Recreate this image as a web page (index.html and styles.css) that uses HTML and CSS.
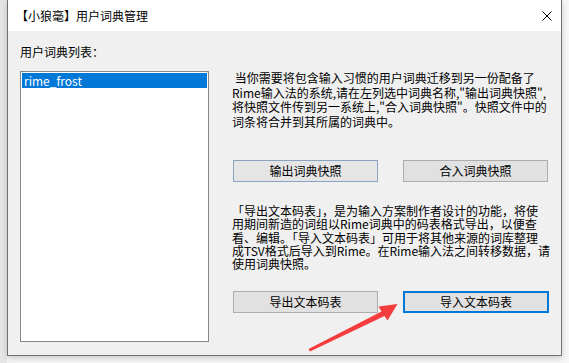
FILE: index.html
```html
<!DOCTYPE html>
<html lang="zh-CN">
<head>
<meta charset="utf-8">
<title>用户词典管理</title>
<link rel="stylesheet" href="styles.css">
</head>
<body>
<div class="screen">
  <div class="window">
    <div class="titlebar">
      <span class="title">【小狼毫】用户词典管理</span>
      <svg class="close" width="10" height="10" viewBox="0 0 10 10"><path d="M0.5 0.5 L9.5 9.5 M9.5 0.5 L0.5 9.5" stroke="#000" stroke-width="1" fill="none"/></svg>
    </div>
    <div class="body">
      <div class="left">
        <div class="label">用户词典列表：</div>
        <div class="listbox">
          <div class="item selected">rime_frost</div>
        </div>
      </div>
      <div class="right">
        <p class="desc desc1">&nbsp;当你需要将包含输入习惯的用户词典迁移到另一份配备了<br>Rime输入法的系统,请在左列选中词典名称,"输出词典快照",<br>将快照文件传到另一系统上,"合入词典快照"。快照文件中的<br>词条将合并到其所属的词典中。</p>
        <div class="btnrow row1">
          <button class="btn btn-hot">输出词典快照</button>
          <button class="btn">合入词典快照</button>
        </div>
        <p class="desc desc2">「导出文本码表」，是为输入方案制作者设计的功能，将使<br>用期间新造的词组以Rime词典中的码表格式导出，以便查<br>看、编辑。「导入文本码表」可用于将其他来源的词库整理<br>成TSV格式后导入到Rime。在Rime输入法之间转移数据，请<br>使用词典快照。</p>
        <div class="btnrow row2">
          <button class="btn">导出文本码表</button>
          <button class="btn btn-focus">导入文本码表</button>
        </div>
      </div>
    </div>
  </div>
  <svg class="arrow" width="569" height="363" viewBox="0 0 569 363">
    <polygon points="308.5,349 381.5,311.5 378.5,306.5 397.5,304 387.5,320.5 384.5,316 310,351.5" fill="#f53d3d"/>
  </svg>
</div>
</body>
</html>
```
FILE: styles.css
```css
html, body {
  margin: 0;
  padding: 0;
}
body {
  width: 569px;
  height: 363px;
  overflow: hidden;
  background: linear-gradient(to right, #e6e6e6 0, #e6e6e6 7px, #f6f6f6 7px);
  font-family: "Noto Sans CJK SC", "Noto Sans", sans-serif;
  font-size: 12px;
  color: #000;
}
.screen {
  position: relative;
  width: 569px;
  height: 363px;
}
.window {
  margin-left: 7px;
  width: 555px;
  height: 356px;
  box-sizing: border-box;
  border: 1px solid #707070;
  border-top: 0;
  display: flex;
  flex-direction: column;
  box-shadow: 0 2px 6px rgba(0, 0, 0, 0.18);
}
.titlebar {
  height: 31px;
  flex: none;
  background: #fff;
  display: flex;
  align-items: center;
  justify-content: space-between;
  padding: 0 9px 0 8px;
}
.title {
  font-size: 12px;
  line-height: 15px;
}
.close {
  display: block;
}
.body {
  flex: 1;
  background: #f0f0f0;
  display: flex;
  padding-left: 12px;
}
.left {
  width: 189px;
  padding-top: 13px;
}
.label {
  line-height: 15px;
  height: 15px;
}
.listbox {
  margin-top: 12px;
  height: 271px;
  box-sizing: border-box;
  border: 1px solid #828790;
  background: #fff;
  padding: 1px;
}
.item {
  height: 15px;
  line-height: 15px;
  padding-left: 2px;
}
.selected {
  background: #0078d7;
  color: #fff;
}
.right {
  margin-left: 23px;
  padding-top: 40px;
}
.desc {
  margin: 0;
  white-space: nowrap;
}
.desc1 {
  line-height: 14.6px;
}
.desc2 {
  margin-top: 22px;
  line-height: 13.3px;
}
.btnrow {
  display: flex;
  gap: 25px;
  margin-left: 1px;
}
.row1 {
  margin-top: 30.6px;
}
.row2 {
  margin-top: 20.5px;
}
.btn {
  width: 145px;
  height: 22px;
  box-sizing: border-box;
  margin: 0;
  padding: 0;
  border: 1px solid #adadad;
  background: #e1e1e1;
  font-family: inherit;
  font-size: 12px;
  color: #000;
  line-height: 15px;
}
.btn-hot {
  border-color: #8aa3c2;
  background: #e5e5e5;
}
.btn-focus {
  width: 146px;
  border: 2px solid #0078d7;
}
.arrow {
  position: absolute;
  left: 0;
  top: 0;
  pointer-events: none;
}
```
